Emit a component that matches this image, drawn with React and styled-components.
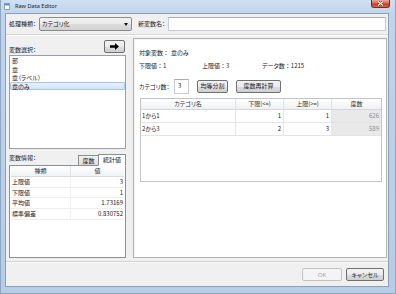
import React from 'react';
import styled, { createGlobalStyle } from 'styled-components';

const Global = createGlobalStyle`
  html, body { margin: 0; padding: 0; width: 396px; height: 294px; overflow: hidden; background: #b9cfe7; }
  * { box-sizing: border-box; }
  body {
    font-family: "Noto Sans CJK JP", "Noto Sans", sans-serif;
    font-size: 6px;
    font-feature-settings: "palt";
    color: #1a1a1a;
  }
`;

const Window = styled.div`
  width: 396px;
  height: 294px;
  display: flex;
  flex-direction: column;
  padding: 0 6px 6px 4px;
  background: linear-gradient(to bottom, #cfe0f3 0px, #c0d5ec 13px, #b7cce5 100%);
  border: 1px solid #8fa6c2;
  border-top: none;
`;

const TitleBar = styled.div`
  height: 13px;
  display: flex;
  align-items: flex-start;
  flex-shrink: 0;
`;

const TitleIcon = styled.svg`
  width: 6px;
  height: 7px;
  margin: 3px 0 0 -1px;
`;

const TitleText = styled.span`
  font-family: "Noto Sans", "Liberation Sans", sans-serif;
  font-size: 5.6px;
  line-height: 8px;
  margin: 2px 0 0 5px;
  color: #1b1b1b;
`;

const CloseButton = styled.div`
  margin-left: auto;
  margin-right: -1px;
  width: 19px;
  height: 8px;
  border: 1px solid #7a2c22;
  border-top: none;
  border-radius: 0 0 3px 3px;
  background: linear-gradient(to bottom, #e9a99c 0%, #d96a55 45%, #c23a22 55%, #d8664d 100%);
  display: flex;
  align-items: center;
  justify-content: center;
`;

const Client = styled.div`
  flex: 1;
  display: flex;
  flex-direction: column;
  background: #f0f0f0;
  border: 1px solid #8c9fb6;
`;

const TopRow = styled.div`
  height: 20px;
  display: flex;
  align-items: center;
  padding: 0 2px 0 3px;
  flex-shrink: 0;
`;

const Label = styled.span`
  line-height: 8px;
  white-space: nowrap;
  margin-right: ${p => p.$gap || 0}px;
  margin-left: ${p => p.$lead || 0}px;
  margin-top: ${p => p.$top || 0}px;
`;

const Colon = styled.span`
  font-feature-settings: normal;
`;

const Select = styled.div`
  width: 93px;
  height: 14px;
  border: 1px solid #8a8a8a;
  border-radius: 2px;
  background: linear-gradient(to bottom, #f3f3f3 0%, #ebebeb 50%, #dddddd 51%, #d2d2d2 100%);
  display: flex;
  align-items: center;
  padding: 0 3px 0 2px;
`;

const SelectText = styled.span`
  flex: 1;
  line-height: 8px;
`;

const TextInput = styled.div`
  flex: 1;
  height: 14px;
  background: #fff;
  border: 1px solid #c9cdd3;
  border-top-color: #abadb3;
`;

const Separator = styled.div`
  height: 2px;
  border-top: 1px solid #d7d7d7;
  border-bottom: 1px solid #ffffff;
  flex-shrink: 0;
`;

const Main = styled.div`
  flex: 1;
  display: flex;
  gap: 7px;
  padding: 2px 1px 3px 3px;
  min-height: 0;
`;

const LeftColumn = styled.div`
  width: 120px;
  display: flex;
  flex-direction: column;
  padding-top: 2px;
`;

const HeadRow = styled.div`
  height: 13px;
  display: flex;
  justify-content: space-between;
  align-items: flex-start;
  flex-shrink: 0;
`;

const IconButton = styled.div`
  width: 21px;
  height: 13px;
  margin-right: 1px;
  border: 1px solid #707070;
  border-radius: 2px;
  background: linear-gradient(to bottom, #f2f2f2 0%, #ebebeb 50%, #dddddd 51%, #cfcfcf 100%);
  display: flex;
  align-items: center;
  justify-content: center;
`;

const ListBox = styled.div`
  margin-top: 2px;
  height: 94px;
  background: #fff;
  border: 1px solid #9a9ea6;
  flex-shrink: 0;
`;

const ListItem = styled.div`
  height: 8.5px;
  line-height: 8px;
  padding-left: 1px;
  border: 1px solid ${p => (p.$selected ? '#a5c5ea' : 'transparent')};
  border-radius: 1px;
  background: ${p => (p.$selected ? 'linear-gradient(to bottom, #e8f1fc, #d3e4f7)' : 'transparent')};
  white-space: nowrap;
`;

const TabRow = styled.div`
  height: 16px;
  display: flex;
  justify-content: space-between;
  align-items: flex-start;
  flex-shrink: 0;
`;

const Tabs = styled.div`
  display: flex;
  align-items: flex-end;
  height: 16px;
`;

const Tab = styled.div`
  height: ${p => (p.$active ? 12 : 10)}px;
  width: ${p => (p.$active ? 28 : 21)}px;
  border: 1px solid #8c8e94;
  border-bottom: ${p => (p.$active ? '1px solid #fff' : 'none')};
  margin-left: ${p => (p.$active ? -1 : 0)}px;
  margin-bottom: ${p => (p.$active ? -1 : 0)}px;
  position: relative;
  z-index: ${p => (p.$active ? 2 : 1)};
  background: ${p => (p.$active ? '#fff' : 'linear-gradient(to bottom, #f2f2f2, #dcdcdc)')};
  display: flex;
  align-items: center;
  justify-content: center;
  line-height: 8px;
`;

const TabPanel = styled.div`
  height: 93px;
  background: #fff;
  border: 1px solid #8c8e94;
  padding: 0 1px;
`;

const StatTable = styled.div`
  display: grid;
  grid-template-columns: 60px 1fr;
`;

const StatHead = styled.div`
  height: 11px;
  line-height: 10px;
  text-align: center;
  color: #333;
  background: linear-gradient(to bottom, #ffffff, #f1f2f4);
  border-bottom: 1px solid #d8dadd;
  border-right: ${p => (p.$last ? 'none' : '1px solid #e2e3e6')};
`;

const StatCell = styled.div`
  height: 10.7px;
  line-height: 10px;
  padding: 0 1px;
  text-align: ${p => (p.$num ? 'right' : 'left')};
  border-bottom: 1px solid #eeeeee;
  border-right: ${p => (p.$num ? 'none' : '1px solid #eeeeee')};
  white-space: nowrap;
`;

const RightPanel = styled.div`
  flex: 1;
  background: #fff;
  border: 1px solid #b3b3b3;
  box-shadow: inset 1px 1px 0 #f4f4f4;
  padding: 5px 4px 0 5px;
  display: flex;
  flex-direction: column;
`;

const InfoLine = styled.div`
  display: flex;
  line-height: 8px;
  height: 8px;
  margin-top: ${p => p.$top || 0}px;
`;

const InfoItem = styled.span`
  width: ${p => (p.$w ? `${p.$w}px` : 'auto')};
  margin-left: ${p => p.$ml || 0}px;
  white-space: nowrap;
`;

const ControlRow = styled.div`
  display: flex;
  align-items: center;
  height: 16px;
  margin-top: 8px;
`;

const NumberBox = styled.div`
  width: 15px;
  height: 15px;
  margin-left: 9px;
  border: 1px solid #c9cdd3;
  border-top-color: #abadb3;
  background: #fff;
  line-height: 12px;
  padding-left: 3px;
`;

const PushButton = styled.div`
  width: ${p => p.$w}px;
  height: 13px;
  margin-left: ${p => p.$ml || 0}px;
  border: 1px solid ${p => (p.$disabled ? '#c2c2c2' : '#707070')};
  border-radius: 2px;
  background: ${p =>
    p.$disabled
      ? '#f4f4f4'
      : 'linear-gradient(to bottom, #f2f2f2 0%, #ebebeb 50%, #dddddd 51%, #cfcfcf 100%)'};
  color: ${p => (p.$disabled ? '#a3a3a3' : '#1a1a1a')};
  display: flex;
  align-items: center;
  justify-content: center;
  line-height: 8px;
  white-space: nowrap;
  font-family: ${p => (p.$latin ? '"Noto Sans", "Liberation Sans", sans-serif' : 'inherit')};
`;

const Grid = styled.div`
  margin: 4px 0 0 1px;
  width: 242px;
  height: 84px;
  border: 1px solid #c4c4c4;
  display: grid;
  grid-template-columns: 95px 48px 48px 1fr;
  grid-auto-rows: 13px;
  grid-template-rows: 11px;
  align-content: start;
`;

const GridHead = styled.div`
  line-height: 10px;
  text-align: center;
  color: #333;
  background: linear-gradient(to bottom, #ffffff, #f0f1f3);
  border-bottom: 1px solid #d5d7da;
  border-right: ${p => (p.$last ? 'none' : '1px solid #e1e2e5')};
  white-space: nowrap;
`;

const GridCell = styled.div`
  line-height: 12px;
  padding: 0 2px 0 1px;
  text-align: ${p => (p.$num ? 'right' : 'left')};
  border-bottom: 1px solid #e4e4e4;
  border-right: ${p => (p.$last ? 'none' : '1px solid #e4e4e4')};
  background: ${p => (p.$readonly ? '#e9e9e9' : '#fff')};
  color: ${p => (p.$readonly ? '#8c8c8c' : '#1a1a1a')};
  white-space: nowrap;
`;

const Footer = styled.div`
  height: 25px;
  flex-shrink: 0;
  border-top: 1px solid #d2d2d2;
  box-shadow: inset 0 1px 0 #fafafa;
  display: flex;
  justify-content: flex-end;
  align-items: flex-start;
  gap: 4px;
  padding: 6px 4px 0 0;
`;

const stats = [
  ['上限値', '3'],
  ['下限値', '1'],
  ['平均値', '1.73169'],
  ['標準偏差', '0.830752'],
];

const rows = [
  ['1から1', '1', '1', '626'],
  ['2から3', '2', '3', '589'],
];

export default function App() {
  return (
    <>
      <Global />
      <Window>
        <TitleBar>
          <TitleIcon viewBox="0 0 6 7">
            <rect x="0.5" y="0.5" width="5" height="6" fill="#ffffff" stroke="#7d8fa6" strokeWidth="0.8" />
            <rect x="0.9" y="0.9" width="4.2" height="1.6" fill="#5b8fd0" />
          </TitleIcon>
          <TitleText>Raw Data Editor</TitleText>
          <CloseButton>
            <svg width="7" height="5" viewBox="0 0 7 5">
              <path d="M1 0.5 L6 4.5 M6 0.5 L1 4.5" stroke="#5a1a10" strokeWidth="2" />
              <path d="M1 0.5 L6 4.5 M6 0.5 L1 4.5" stroke="#ffffff" strokeWidth="1.1" />
            </svg>
          </CloseButton>
        </TitleBar>
        <Client>
          <TopRow>
            <Label $gap={3}>処理種類：</Label>
            <Select>
              <SelectText>カテゴリ化</SelectText>
              <svg width="4" height="3" viewBox="0 0 4 3">
                <path d="M0 0 L4 0 L2 3 Z" fill="#111" />
              </svg>
            </Select>
            <Label $lead={6} $gap={3}>新変数名：</Label>
            <TextInput />
          </TopRow>
          <Separator />
          <Main>
            <LeftColumn>
              <HeadRow>
                <Label $top={6}>変数選択：</Label>
                <IconButton>
                  <svg width="9" height="7" viewBox="0 0 9 7">
                    <path d="M0 2.2 H5 V0 L9 3.5 L5 7 V4.8 H0 Z" fill="#000" />
                  </svg>
                </IconButton>
              </HeadRow>
              <ListBox>
                <ListItem>部</ListItem>
                <ListItem>章</ListItem>
                <ListItem>章（ラベル）</ListItem>
                <ListItem $selected>章のみ</ListItem>
              </ListBox>
              <TabRow>
                <Label $top={5}>変数情報：</Label>
                <Tabs>
                  <Tab>度数</Tab>
                  <Tab $active>統計値</Tab>
                </Tabs>
              </TabRow>
              <TabPanel>
                <StatTable>
                  <StatHead>種類</StatHead>
                  <StatHead $last>値</StatHead>
                  {stats.map(([k, v]) => (
                    <React.Fragment key={k}>
                      <StatCell>{k}</StatCell>
                      <StatCell $num>{v}</StatCell>
                    </React.Fragment>
                  ))}
                </StatTable>
              </TabPanel>
            </LeftColumn>
            <RightPanel>
              <InfoLine $top={5}>
                <InfoItem>対象変数<Colon>：</Colon></InfoItem>
                <InfoItem $ml={2}>章のみ</InfoItem>
              </InfoLine>
              <InfoLine $top={5}>
                <InfoItem $w={63}>下限値<Colon>：</Colon>1</InfoItem>
                <InfoItem $w={60}>上限値<Colon>：</Colon>3</InfoItem>
                <InfoItem>データ数<Colon>：</Colon>1215</InfoItem>
              </InfoLine>
              <ControlRow>
                <InfoItem $w={26}>カテゴリ数：</InfoItem>
                <NumberBox>3</NumberBox>
                <PushButton $w={31} $ml={8}>均等分割</PushButton>
                <PushButton $w={45} $ml={8}>度数再計算</PushButton>
              </ControlRow>
              <Grid>
                <GridHead>カテゴリ名</GridHead>
                <GridHead>下限(&lt;=)</GridHead>
                <GridHead>上限(&gt;=)</GridHead>
                <GridHead $last>度数</GridHead>
                {rows.map(r => (
                  <React.Fragment key={r[0]}>
                    <GridCell>{r[0]}</GridCell>
                    <GridCell $num>{r[1]}</GridCell>
                    <GridCell $num>{r[2]}</GridCell>
                    <GridCell $num $last $readonly>{r[3]}</GridCell>
                  </React.Fragment>
                ))}
              </Grid>
            </RightPanel>
          </Main>
          <Footer>
            <PushButton $w={40} $disabled $latin>OK</PushButton>
            <PushButton $w={38}>キャンセル</PushButton>
          </Footer>
        </Client>
      </Window>
    </>
  );
}
